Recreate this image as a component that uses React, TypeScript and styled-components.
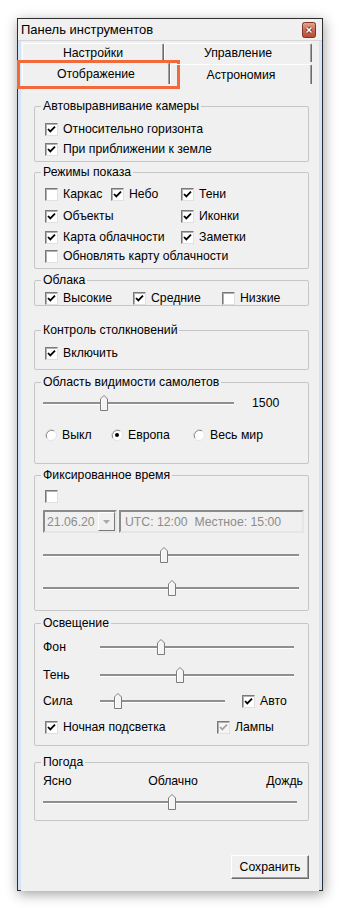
import React from "react";
import styled, { createGlobalStyle } from "styled-components";

const GlobalStyle = createGlobalStyle`
  html, body {
    margin: 0;
    padding: 0;
    background: #ffffff;
  }
  body {
    font-family: "Liberation Sans", Arial, sans-serif;
    font-size: 12.25px;
    color: #000;
  }
  * {
    box-sizing: border-box;
  }
`;

const Page = styled.div`
  width: 339px;
  height: 908px;
  padding: 18px 0 0 17px;
`;

const Window = styled.div`
  width: 306px;
  height: 873px;
  border: 1px solid #2e2e2e;
  background: #d4e3f5;
  box-shadow: 1px 3px 12px rgba(0, 0, 0, 0.38);
  display: flex;
  flex-direction: column;
`;

const TitleBar = styled.div`
  height: 22px;
  flex: none;
  background: #f0f0f0;
  border-bottom: 1px solid #d6d6d6;
  display: flex;
  align-items: center;
  justify-content: space-between;
  padding: 0 6px 0 3px;
`;

const Title = styled.span`
  font-size: 13px;
  color: #000;
`;

const Body = styled.div`
  flex: 1;
  margin: 0 3px;
  background: #f0f0f0;
  display: flex;
  flex-direction: column;
`;

const Tabs = styled.div`
  margin: 2px 0 0 1px;
  width: 290px;
  display: flex;
  flex-direction: column;
`;

const TabRow = styled.div<{ $h: number }>`
  display: flex;
  height: ${(p) => p.$h}px;
`;

const Tab = styled.div<{ $w: number; $low?: boolean; $marked?: boolean }>`
  position: relative;
  width: ${(p) => p.$w}px;
  margin-top: ${(p) => (p.$low ? 2 : 0)}px;
  border-top: 1px solid #ffffff;
  border-left: 1px solid #ffffff;
  border-right: 1px solid #6b6b6b;
  box-shadow: inset -1px 0 0 #a0a0a0;
  border-radius: 2px 2px 0 0;
  display: flex;
  align-items: center;
  justify-content: center;
  font-size: 12.25px;

  ${(p) =>
    p.$marked &&
    `
    &::after {
      content: "";
      position: absolute;
      left: -6px;
      top: -3px;
      width: 157px;
      height: 23px;
      border: 3px solid #f2693b;
    }
  `}
`;

const TabPage = styled.div`
  flex: 1;
  display: flex;
  flex-direction: column;
  padding: 15px 10px 12px 13px;
`;

const Group = styled.fieldset<{ $mt: number; $h: number }>`
  margin: ${(p) => p.$mt}px 0 0 0;
  padding: 0 8px;
  height: ${(p) => p.$h}px;
  border: 1px solid #c6c6c6;
  border-radius: 2px;
  min-width: 0;
  flex: none;
`;

const Legend = styled.legend`
  margin-left: -2px;
  padding: 0 2px;
  font-size: 12.25px;
  line-height: 14px;
`;

const Stack = styled.div<{ $pt: number; $gap?: number }>`
  display: flex;
  flex-direction: column;
  padding-top: ${(p) => p.$pt}px;
  gap: ${(p) => p.$gap ?? 0}px;
`;

const Grid = styled.div<{ $cols: string; $rows?: string; $pt: number }>`
  display: grid;
  grid-template-columns: ${(p) => p.$cols};
  grid-template-rows: ${(p) => p.$rows ?? "auto"};
  align-items: start;
  padding-top: ${(p) => p.$pt}px;
`;

const Span = styled.div<{ $n: number }>`
  grid-column: span ${(p) => p.$n};
`;

const Line = styled.div<{ $mt?: number }>`
  display: flex;
  align-items: center;
  margin-top: ${(p) => p.$mt ?? 0}px;
`;

const CheckLabel = styled.label`
  display: inline-flex;
  align-items: center;
  height: 18px;
  white-space: nowrap;
`;

const Box = styled.span<{ $off?: boolean }>`
  width: 13px;
  height: 13px;
  flex: none;
  margin: 0 5px 0 2px;
  border: 1px solid;
  border-color: #7a7a7a #e0e0e0 #e0e0e0 #7a7a7a;
  box-shadow: inset 1px 1px 0 #b0b0b0;
  background: ${(p) => (p.$off ? "#f5f5f5" : "#ffffff")};
  display: flex;
  align-items: center;
  justify-content: center;
`;

const Check = ({
  label,
  checked,
  off,
}: {
  label?: string;
  checked?: boolean;
  off?: boolean;
}) => (
  <CheckLabel>
    <Box $off={off}>
      {checked && (
        <svg width="9" height="9" viewBox="0 0 9 9">
          <polyline
            points="1,4 3.3,6.4 8,1.6"
            fill="none"
            stroke={off ? "#a5a5a5" : "#000"}
            strokeWidth="1.8"
          />
        </svg>
      )}
    </Box>
    {label}
  </CheckLabel>
);

const RadioIcon = styled.svg`
  flex: none;
  margin: 0 5px 0 2px;
`;

const Radio = ({ label, on }: { label: string; on?: boolean }) => (
  <CheckLabel>
    <RadioIcon width="12" height="12" viewBox="0 0 12 12">
      <circle cx="6" cy="6" r="5.5" fill="#fff" stroke="#e4e4e4" />
      <path d="M1.8 9.2 A5.5 5.5 0 0 1 9.2 1.8" fill="none" stroke="#8a8a8a" />
      {on && <circle cx="6" cy="6" r="2" fill="#000" />}
    </RadioIcon>
    {label}
  </CheckLabel>
);

const SliderBox = styled.div<{ $w: number }>`
  position: relative;
  width: ${(p) => p.$w}px;
  height: 20px;
  flex: none;
  display: flex;
  align-items: center;
`;

const Track = styled.div`
  width: 100%;
  height: 3px;
  background: #8f8f8f;
  border-bottom: 1px solid #ffffff;
`;

const Thumb = styled.svg`
  position: absolute;
  top: 2px;
`;

const Slider = ({ w, at }: { w: number; at: number }) => (
  <SliderBox $w={w}>
    <Track />
    <Thumb width="8" height="16" viewBox="0 0 8 16" style={{ left: at }}>
      <path d="M0.5 15.5 V4 L4 0.5 L7.5 4 V15.5 Z" fill="#f4f4f4" stroke="#7c7c7c" />
      <path d="M1.5 14.5 V4.4 L4 1.9" fill="none" stroke="#ffffff" />
    </Thumb>
  </SliderBox>
);

const RangeRow = styled.div`
  display: grid;
  grid-template-columns: 209px auto;
  align-items: center;
  justify-content: start;
`;

const Sunken = styled.div<{ $w: number; $ml?: number }>`
  width: ${(p) => p.$w}px;
  height: 23px;
  flex: none;
  margin-left: ${(p) => p.$ml ?? 0}px;
  border: 2px solid;
  border-color: #8a8a8a #e6e6e6 #e6e6e6 #8a8a8a;
  background: #f0f0f0;
  color: #8c8c8c;
  display: flex;
  align-items: center;
  white-space: pre;
`;

const ComboText = styled.span`
  flex: 1;
  padding-left: 2px;
`;

const DropButton = styled.div`
  width: 17px;
  height: 19px;
  border: 1px solid;
  border-color: #ffffff #7a7a7a #7a7a7a #ffffff;
  display: flex;
  align-items: center;
  justify-content: center;
`;

const FieldText = styled.span`
  padding-left: 4px;
`;

const Labeled = styled.span<{ $w: number }>`
  width: ${(p) => p.$w}px;
  flex: none;
`;

const Scale = styled.div`
  width: 260px;
  display: grid;
  grid-template-columns: 1fr auto 1fr;
  padding-top: 5px;
  line-height: 14px;

  & > span:last-child {
    justify-self: end;
  }
`;

const Footer = styled.div`
  margin-top: 34px;
  display: flex;
  justify-content: flex-end;
`;

const Button = styled.button`
  width: 78px;
  height: 24px;
  font-family: inherit;
  font-size: 12.25px;
  color: #000;
  background: #f0f0f0;
  border: 1px solid;
  border-color: #ffffff #6b6b6b #6b6b6b #ffffff;
  box-shadow: inset -1px -1px 0 #a0a0a0;
  padding: 0;
`;

const CloseIcon = () => (
  <svg width="14" height="16" viewBox="0 0 14 16">
    <defs>
      <linearGradient id="cl" x1="0" y1="0" x2="0" y2="1">
        <stop offset="0" stopColor="#e8a590" />
        <stop offset="0.5" stopColor="#d06a52" />
        <stop offset="1" stopColor="#b84a33" />
      </linearGradient>
    </defs>
    <rect x="0.5" y="0.5" width="13" height="15" rx="2" fill="url(#cl)" stroke="#7d3526" />
    <path d="M4.5 5.5 L9.5 10.5 M9.5 5.5 L4.5 10.5" stroke="#5a2418" strokeWidth="3" />
    <path d="M4.5 5.5 L9.5 10.5 M9.5 5.5 L4.5 10.5" stroke="#ffffff" strokeWidth="1.6" />
  </svg>
);

const ArrowDown = () => (
  <svg width="7" height="4" viewBox="0 0 7 4">
    <path d="M0 0 H7 L3.5 4 Z" fill="#a8a8a8" />
  </svg>
);

export default function App() {
  return (
    <>
      <GlobalStyle />
      <Page>
        <Window>
          <TitleBar>
            <Title>Панель инструментов</Title>
            <CloseIcon />
          </TitleBar>
          <Body>
            <Tabs>
              <TabRow $h={19}>
                <Tab $w={142}>Настройки</Tab>
                <Tab $w={148}>Управление</Tab>
              </TabRow>
              <TabRow $h={22}>
                <Tab $w={148} $marked>
                  Отображение
                </Tab>
                <Tab $w={142} $low>
                  Астрономия
                </Tab>
              </TabRow>
            </Tabs>

            <TabPage>
              <Group $mt={0} $h={63}>
                <Legend>Автовыравнивание камеры</Legend>
                <Stack $pt={7} $gap={2}>
                  <Check label="Относительно горизонта" checked />
                  <Check label="При приближении к земле" checked />
                </Stack>
              </Group>

              <Group $mt={3} $h={104}>
                <Legend>Режимы показа</Legend>
                <Grid $cols="66px 70px 1fr" $rows="22px 21px 19px 18px" $pt={6}>
                  <Check label="Каркас" />
                  <Check label="Небо" checked />
                  <Check label="Тени" checked />
                  <Span $n={2}>
                    <Check label="Объекты" checked />
                  </Span>
                  <Check label="Иконки" checked />
                  <Span $n={2}>
                    <Check label="Карта облачности" checked />
                  </Span>
                  <Check label="Заметки" checked />
                  <Span $n={3}>
                    <Check label="Обновлять карту облачности" />
                  </Span>
                </Grid>
              </Group>

              <Group $mt={4} $h={33}>
                <Legend>Облака</Legend>
                <Grid $cols="88px 89px 1fr" $pt={2}>
                  <Check label="Высокие" checked />
                  <Check label="Средние" checked />
                  <Check label="Низкие" />
                </Grid>
              </Group>

              <Group $mt={17} $h={47}>
                <Legend>Контроль столкновений</Legend>
                <Stack $pt={7}>
                  <Check label="Включить" checked />
                </Stack>
              </Group>

              <Group $mt={5} $h={89}>
                <Legend>Область видимости самолетов</Legend>
                <Stack $pt={4}>
                  <RangeRow>
                    <Slider w={191} at={57} />
                    <span>1500</span>
                  </RangeRow>
                  <Grid $cols="66px 82px 1fr" $pt={13}>
                    <Radio label="Выкл" />
                    <Radio label="Европа" on />
                    <Radio label="Весь мир" />
                  </Grid>
                </Stack>
              </Group>

              <Group $mt={4} $h={143}>
                <Legend>Фиксированное время</Legend>
                <Stack $pt={5}>
                  <Check />
                  <Line $mt={5}>
                    <Sunken $w={74}>
                      <ComboText>21.06.20</ComboText>
                      <DropButton>
                        <ArrowDown />
                      </DropButton>
                    </Sunken>
                    <Sunken $w={185} $ml={2}>
                      <FieldText>UTC: 12:00  Местное: 15:00</FieldText>
                    </Sunken>
                  </Line>
                  <Line $mt={12}>
                    <Slider w={256} at={117} />
                  </Line>
                  <Line $mt={13}>
                    <Slider w={256} at={125} />
                  </Line>
                </Stack>
              </Group>

              <Group $mt={5} $h={130}>
                <Legend>Освещение</Legend>
                <Grid $cols="1fr" $rows="28px 26px 27px 20px" $pt={7}>
                  <Line>
                    <Labeled $w={57}>Фон</Labeled>
                    <Slider w={194} at={57} />
                  </Line>
                  <Line>
                    <Labeled $w={57}>Тень</Labeled>
                    <Slider w={194} at={76} />
                  </Line>
                  <Line>
                    <Labeled $w={57}>Сила</Labeled>
                    <Slider w={125} at={14} />
                    <Labeled $w={15} />
                    <Check label="Авто" checked />
                  </Line>
                  <Line>
                    <Labeled $w={172}>
                      <Check label="Ночная подсветка" checked />
                    </Labeled>
                    <Check label="Лампы" checked off />
                  </Line>
                </Grid>
              </Group>

              <Group $mt={9} $h={66}>
                <Legend>Погода</Legend>
                <Scale>
                  <span>Ясно</span>
                  <span>Облачно</span>
                  <span>Дождь</span>
                </Scale>
                <Line $mt={4}>
                  <Slider w={254} at={125} />
                </Line>
              </Group>

              <Footer>
                <Button>Сохранить</Button>
              </Footer>
            </TabPage>
          </Body>
        </Window>
      </Page>
    </>
  );
}
